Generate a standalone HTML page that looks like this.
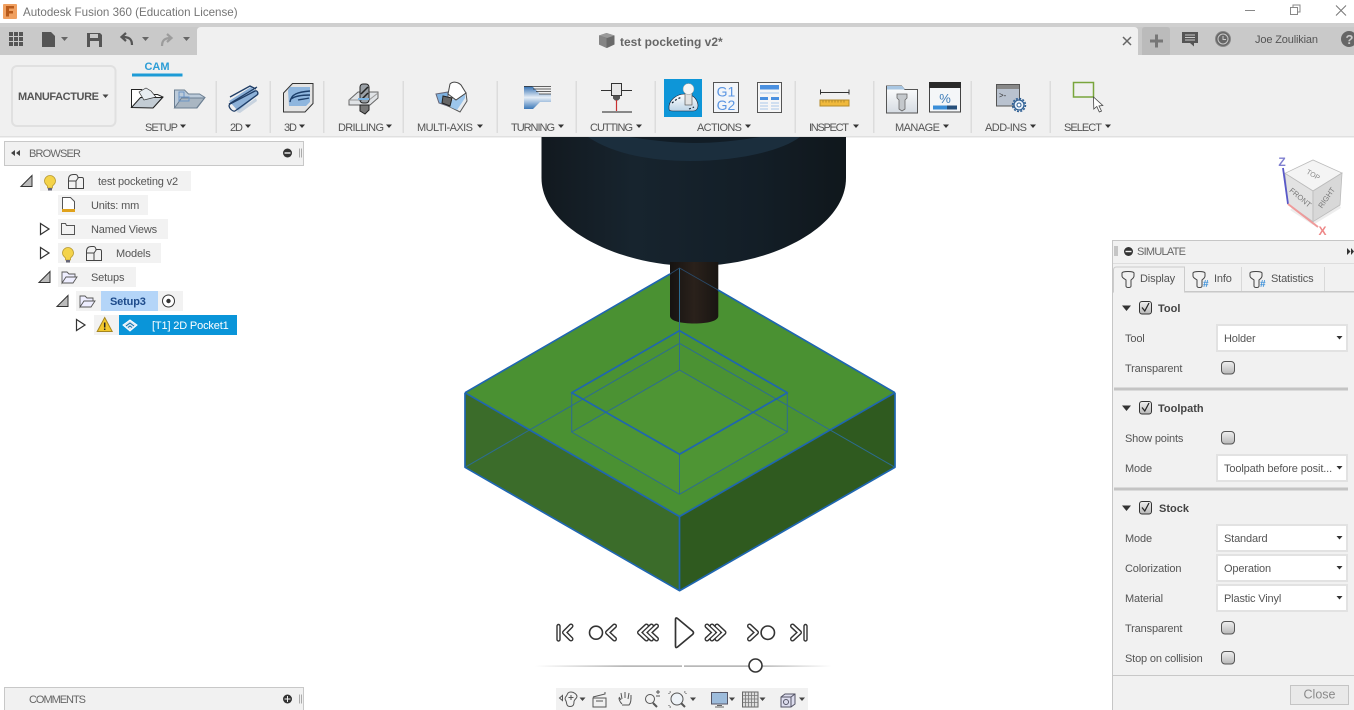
<!DOCTYPE html>
<html><head><meta charset="utf-8"><title>Autodesk Fusion 360</title>
<style>
html,body{margin:0;padding:0;background:#fff;width:1354px;height:710px;overflow:hidden}
svg{display:block;font-family:"Liberation Sans",Arial,sans-serif}
.l{font-size:11px;fill:#555}
.t{font-size:11px;fill:#555;letter-spacing:-.15px}
.p{font-size:11px;fill:#555;letter-spacing:-.15px}
.h{font-size:11px;font-weight:bold;fill:#444}
</style></head><body>
<svg width="1354" height="710" viewBox="0 0 1354 710" xmlns="http://www.w3.org/2000/svg">
<defs>
<linearGradient id="hold" x1="0" x2="1" y1="0" y2="0"><stop offset="0" stop-color="#12191f"/><stop offset=".3" stop-color="#17242e"/><stop offset=".7" stop-color="#131e27"/><stop offset="1" stop-color="#10171c"/></linearGradient>
<linearGradient id="shank" x1="0" x2="1" y1="0" y2="0"><stop offset="0" stop-color="#161311"/><stop offset=".5" stop-color="#2a211b"/><stop offset="1" stop-color="#191512"/></linearGradient>
<linearGradient id="slide" x1="0" x2="1" y1="0" y2="0"><stop offset="0" stop-color="#fff"/><stop offset=".3" stop-color="#999"/><stop offset=".75" stop-color="#999"/><stop offset="1" stop-color="#fff"/></linearGradient>
<linearGradient id="turn" x1="0" x2="0" y1="0" y2="1"><stop offset="0" stop-color="#2f6db0"/><stop offset=".5" stop-color="#e6eef7"/><stop offset="1" stop-color="#3b78b8"/></linearGradient>
<linearGradient id="dome" x1="0" x2="0" y1="0" y2="1"><stop offset="0" stop-color="#fff"/><stop offset="1" stop-color="#bcd3e6"/></linearGradient>
<linearGradient id="win" x1="0" x2="0" y1="0" y2="1"><stop offset="0" stop-color="#fff"/><stop offset="1" stop-color="#d5dbe2"/></linearGradient>
<linearGradient id="cb" x1="0" x2="0" y1="0" y2="1"><stop offset="0" stop-color="#f0f0f0"/><stop offset="1" stop-color="#b8b8b8"/></linearGradient>
</defs>

<!-- title bar -->
<rect width="1354" height="23" fill="#fff"/>
<rect x="3" y="4" width="14" height="15" rx="1" fill="#f0a060"/>
<path d="M6 6h8v2.500h-5v2.500h4v2.500h-4v3h-3z" fill="#b85a1a"/>
<text x="23" y="16" font-size="11.600" fill="#757575">Autodesk Fusion 360 (Education License)</text>
<path d="M1245 10.500h10" stroke="#888"/>
<path d="M1290.500 7.500h7v7h-7zM1293 7.500v-2.500h7v7h-2.500" fill="none" stroke="#888"/>
<path d="M1336 5.500l10 10M1346 5.500l-10 10" stroke="#777"/>

<!-- tab bar -->
<rect y="23" width="1354" height="32" fill="#c9c9c9"/>
<rect y="23" width="1354" height="4" fill="#cfcfcf"/>
<path d="M197 55V31q0-4 4-4H1134q4 0 4 4V55z" fill="#f0f0f0"/>
<path d="M1142 55V30q0-3 3-3h22q3 0 3 3V55z" fill="#bbb"/>
<path d="M1150 41h13M1156.500 34.500v13" stroke="#777" stroke-width="3"/>
<g fill="#555">
<path d="M9 32h4v4h-4zM14 32h4v4h-4zM19 32h4v4h-4zM9 37h4v4h-4zM14 37h4v4h-4zM19 37h4v4h-4zM9 42h4v4h-4zM14 42h4v4h-4zM19 42h4v4h-4z"/>
<path d="M42 32h9l4 4v11h-13z"/>
<path d="M61 37h7l-3.500 4z" fill="#666"/>
<path d="M87 33h13l2 2v12h-15zM90 34v4h8v-4zM90 41v6h9v-6z" fill-rule="evenodd"/>
<path d="M142 37h7l-3.500 4zM183 37h7l-3.500 4z" fill="#666"/>
</g>
<path d="M132 45c0-6-3-8-9-8M126 33l-4.500 4 4.500 4" fill="none" stroke="#555" stroke-width="2.200"/>
<path d="M163 46c0-6 3-8 9-8M168 34l4.500 4-4.500 4" fill="none" stroke="#9c9c9c" stroke-width="2.200" transform="translate(-1 0)"/>
<path d="M599 35.500l7.500-2.500 8 2.500v9l-7.500 3.500-8-3.500z" fill="#6a6a6a"/>
<path d="M599 35.500l7.500-2.500 8 2.500-7.500 2.500z" fill="#9a9a9a"/>
<path d="M599 35.500l7.500 2.500v10l-7.500-3.500z" fill="#858585"/>
<text x="620" y="46" font-size="12" font-weight="bold" fill="#666">test pocketing v2*</text>
<path d="M1123 37l8 8M1131 37l-8 8" stroke="#666" stroke-width="1.500"/>
<path d="M1182 32h16v11h-4v3.500l-4-3.500h-8z" fill="#555"/><path d="M1185 35h10M1185 37.500h10M1185 40h10" stroke="#c9c9c9"/>
<circle cx="1223" cy="39" r="7.500" fill="#666" stroke="#888" stroke-width="1"/><circle cx="1223" cy="39" r="5" fill="none" stroke="#c9c9c9"/><path d="M1223 36v3.500h3" stroke="#c9c9c9" fill="none"/>
<text x="1255" y="43" font-size="11" letter-spacing="-.15" fill="#555">Joe Zoulikian</text>
<circle cx="1349" cy="39" r="8" fill="#666"/><text x="1345.500" y="44" font-size="13" font-weight="bold" fill="#c9c9c9">?</text>

<!-- ribbon -->
<rect y="55" width="1354" height="81" fill="#f0f0f0"/>
<rect y="136" width="1354" height="1.500" fill="#e0e0e0"/>
<rect x="12" y="66" width="103.500" height="60" rx="5" fill="#f0f0f0" stroke="#e0e0e0" stroke-width="2"/>
<text x="18" y="100" font-size="11" font-weight="bold" fill="#555" textLength="81" lengthAdjust="spacing">MANUFACTURE</text>
<path d="M102.500 94.500h6l-3 3.500z" fill="#444"/>
<text x="157" y="70" font-size="11" font-weight="bold" fill="#2c9dd6" text-anchor="middle">CAM</text>
<rect x="132" y="73.500" width="50.500" height="3" fill="#1d9bd6"/>
<g fill="#dcdcdc">
<rect x="215.500" y="81" width="1.500" height="52"/><rect x="269.500" y="81" width="1.500" height="52"/><rect x="323" y="81" width="1.500" height="52"/><rect x="402.500" y="81" width="1.500" height="52"/><rect x="496.500" y="81" width="1.500" height="52"/><rect x="575.500" y="81" width="1.500" height="52"/><rect x="654.500" y="81" width="1.500" height="52"/><rect x="794.500" y="81" width="1.500" height="52"/><rect x="873" y="81" width="1.500" height="52"/><rect x="970.500" y="81" width="1.500" height="52"/><rect x="1049.500" y="81" width="1.500" height="52"/>
</g>
<text class="l" x="145" y="131" textLength="33" lengthAdjust="spacing">SETUP</text>
<text class="l" x="230" y="131" textLength="13" lengthAdjust="spacing">2D</text>
<text class="l" x="284" y="131" textLength="13" lengthAdjust="spacing">3D</text>
<text class="l" x="338" y="131" textLength="46" lengthAdjust="spacing">DRILLING</text>
<text class="l" x="417" y="131" textLength="56" lengthAdjust="spacing">MULTI-AXIS</text>
<text class="l" x="511" y="131" textLength="44" lengthAdjust="spacing">TURNING</text>
<text class="l" x="590" y="131" textLength="43" lengthAdjust="spacing">CUTTING</text>
<text class="l" x="697" y="131" textLength="45" lengthAdjust="spacing">ACTIONS</text>
<text class="l" x="809" y="131" textLength="40" lengthAdjust="spacing">INSPECT</text>
<text class="l" x="895" y="131" textLength="45" lengthAdjust="spacing">MANAGE</text>
<text class="l" x="985" y="131" textLength="42" lengthAdjust="spacing">ADD-INS</text>
<text class="l" x="1064" y="131" textLength="38" lengthAdjust="spacing">SELECT</text>
<g fill="#333">
<path d="M180 124.500h6l-3 3.500zM245 124.500h6l-3 3.500zM299 124.500h6l-3 3.500zM386 124.500h6l-3 3.500zM477 124.500h6l-3 3.500zM558 124.500h6l-3 3.500zM636 124.500h6l-3 3.500zM745 124.500h6l-3 3.500zM853 124.500h6l-3 3.500zM943 124.500h6l-3 3.500zM1030 124.500h6l-3 3.500zM1105 124.500h6l-3 3.500z"/>
</g>

<!-- setup icons -->
<path d="M131.500 89.500h10l6 5h10l5.500 2.500-9.500 10.500h-22z" fill="#fff" stroke="#222"/>
<path d="M131.500 107.500l9-10h22l-9.500 10.500z" fill="#c3ccd4" stroke="#222"/>
<path d="M139 92l7-4 5 3 5 6-12 3z" fill="#e8edf2" stroke="#333" stroke-width=".7"/>
<path d="M174.500 90h10l4 4h11l5.500 3.500-8 10.500h-22.500z" fill="#bccbda" stroke="#6c7f92"/>
<path d="M174.500 108l7-10h23l-8 10z" fill="#a9b6c2" stroke="#6c7f92"/>
<path d="M179 92h5v5h5v4h-10zM179 97h5" fill="none" stroke="#6b95c6"/>
<!-- 2D -->
<path d="M229 101l22-14 8 7-21 17z" fill="#8db1d8"/>
<path d="M230 97l20-11 6 3M229 104l28-17M235 111l22-16c2-2 0-5-2-4l-25 13c-3 2 2 8 5 7" fill="none" stroke="#1f3d66" stroke-width="1.300"/>
<path d="M236 112l20-14 1 3-17 12z" fill="#c8d3df"/>
<!-- 3D -->
<path d="M283.500 93l9-9.500h20.500v20l-8 8.500h-21.500z" fill="#e4e4e4" stroke="#333"/>
<path d="M288 90l2-3h20v15l-4 4h-17z" fill="#8fb6de"/>
<path d="M290 102c1-8 8-10 20-11M291 99c4-3 10-4 19-4M298 100c4-1 8-1 11-2" fill="none" stroke="#1d3f6b" stroke-width="1.400"/>
<!-- drilling -->
<path d="M349 100l9-8h20v6l-8 7h-21z" fill="#e0e3e6" stroke="#666"/>
<path d="M349 100h20l9-7" fill="none" stroke="#999"/>
<rect x="360" y="84" width="9" height="19" rx="3" fill="#9aa0a6" stroke="#222"/>
<path d="M361 94l7-7M361 100l7-7" stroke="#222" stroke-width="1.500"/>
<path d="M360 105h9v5l-4 4-5-3z" fill="#777" stroke="#222"/>
<path d="M358 99h11" stroke="#7ab2e0" stroke-width="2"/>
<!-- multi-axis -->
<path d="M436 94l12-2v14l-9-3z" fill="#7fb2e0" stroke="#667"/>
<path d="M454 100l12-7 1 8-7 11-12-6z" fill="#e6eaee" stroke="#555"/>
<path d="M452 100l13-6 0 4-8 12-7-3z" fill="#9cc6ec"/>
<path d="M450 84c3-3 8-2 11 1l5 8-10 7-8-6z" fill="#fff" stroke="#444"/>
<path d="M443 96l9 2-2 8-8-3z" fill="#666" stroke="#222"/>
<!-- turning -->
<path d="M524 86h8l8 8h11v8h-11l-7 7h-9z" fill="url(#turn)"/>
<path d="M524 86.500h27M533 89h18M536 91.500h15M539 94h12" stroke="#333" stroke-width=".8"/>
<!-- cutting -->
<path d="M601 90.500h31" stroke="#333"/>
<rect x="611.500" y="83.500" width="10" height="12" fill="#e8e8e8" stroke="#333"/>
<path d="M613 95.500h7v3l-2 2h-3l-2-2z" fill="#555"/>
<path d="M616.500 100v11" stroke="#c83030" stroke-width="1.200"/>
<path d="M602 112h30" stroke="#888" stroke-width="2"/>
<!-- actions -->
<rect x="664" y="79" width="38" height="38" fill="#0e96d8"/>
<path d="M669 109c-1-9 8-15 16-15 7 0 12 4 13 11 0 5-3 6-5 6h-20c-3 0-4-1-4-2z" fill="url(#dome)" stroke="#223" stroke-width=".6"/>
<rect x="685" y="92" width="7" height="13" fill="#e2e2e2" stroke="#444" stroke-width=".6"/>
<circle cx="688.500" cy="89" r="5.500" fill="#f6f6f6" stroke="#999" stroke-width=".5"/>
<path d="M672 103l5-4 5-2M689 109l5-2" stroke="#123" stroke-width="1.200" stroke-dasharray="2 2" fill="none"/>
<rect x="713.500" y="82.500" width="25" height="30" fill="#f2f5f9" stroke="#555"/>
<text x="726" y="96.500" font-size="14" fill="#5a95e2" text-anchor="middle">G1</text>
<text x="726" y="110" font-size="14" fill="#5a95e2" text-anchor="middle">G2</text>
<rect x="757.500" y="82.500" width="24" height="30" fill="#f6f6f6" stroke="#555"/>
<rect x="760" y="85" width="19" height="4.500" fill="#4a90e0"/>
<rect x="760" y="97" width="8" height="3" fill="#4a90e0"/><rect x="771" y="97" width="8" height="3" fill="#4a90e0"/>
<path d="M760 93h19M760 103h8M771 103h8M760 106h8M771 106h8M760 109h8M771 109h8" stroke="#a9c8ea"/>
<!-- inspect -->
<path d="M820.500 89.500v5M849 89.500v5M820.500 92.500h28.500" stroke="#333"/>
<rect x="820" y="100" width="29" height="6" fill="#f0b93c" stroke="#b58a2a"/>
<path d="M823 100.500v2M826 100.500v2M829 100.500v2M832 100.500v2M835 100.500v2M838 100.500v2M841 100.500v2M844 100.500v2" stroke="#8a6a1a" stroke-width=".6"/>
<!-- manage -->
<path d="M886.500 86h15l3 3.500h13v23.500h-31z" fill="url(#win)" stroke="#555"/>
<path d="M887 86h15l3 3.500h-18z" fill="#a8c6e2"/>
<path d="M897 94h10v4l-2 2v9l-3 2-3-2v-9l-2-2z" fill="#c4c8cc" stroke="#666" stroke-width=".8"/>
<rect x="929.500" y="82.500" width="31" height="29.500" fill="#f4f6f8" stroke="#444"/>
<rect x="929" y="82" width="32" height="6" fill="#2a2a2a"/>
<text x="945" y="103" font-size="13" fill="#3f7db8" text-anchor="middle">%</text>
<rect x="933" y="105.500" width="14" height="4" fill="#3a8ed8"/><rect x="947" y="105.500" width="10" height="4" fill="#264f7a"/>
<!-- add-ins -->
<rect x="996.500" y="84.500" width="23" height="21.500" fill="#b9c2cf" stroke="#555"/>
<path d="M997 85h22v4h-22z" fill="#888"/>
<text x="999" y="98" font-size="8" fill="#333">&gt;-</text>
<circle cx="1019" cy="105" r="5" fill="#e8f1fa" stroke="#2e5f94" stroke-width="1.300"/>
<circle cx="1019" cy="105" r="6.500" fill="none" stroke="#2e5f94" stroke-width="1.500" stroke-dasharray="2 1.400"/>
<circle cx="1019" cy="105" r="2" fill="#fff" stroke="#2e5f94"/>
<!-- select -->
<rect x="1073.500" y="82.500" width="20" height="14.500" fill="none" stroke="#79a53c" stroke-width="1.500"/>
<path d="M1093.500 97l.3 12 3-2.500 2.500 5.500 2.200-1-2.500-5 3.800-.5z" fill="#fff" stroke="#444" stroke-width=".8"/>

<!-- holder -->
<path d="M541.500 137H846V178C846 228 770 266 694 266S541.500 228 541.500 178Z" fill="url(#hold)"/>
<path d="M588 137H800C780 152 735 161 690 161S610 152 588 137Z" fill="#1b2e3d"/>
<path d="M630 137H760C735 141 715 143 695 143S655 141 630 137Z" fill="#121d26"/>

<!-- stock -->
<path d="M465 392.700L679.500 516.500V590.700L465 467.300Z" fill="#3b6c2a"/>
<path d="M895 392.700L679.500 516.500V590.700L895 467.300Z" fill="#2f5a1f"/>
<path d="M679.500 268L895 392.700L679.500 516.500L465 392.700Z" fill="#4a9132"/>
<path d="M670 262h48.300v54c0 5-11 7.500-24 7.500s-24.300-2.500-24.300-7.500z" fill="url(#shank)"/>
<path d="M679.500 370L787.300 432L679.500 494.300L571.700 432Z" fill="#4e9534"/>
<path d="M679.500 370L787.300 432V392.700L679.500 330.700L571.700 392.700V432Z" fill="#4b9233"/>
<!-- hidden lines -->
<g fill="none" stroke="#2c6c92" stroke-width="1">
<path d="M465 467.300L679.500 343.300L895 467.300M679.500 268V343.300"/>
<path d="M679.500 330.700V370M571.700 392.700V432M787.300 392.700V432M679.500 454.300V494.300"/>
<path d="M679.500 370L787.300 432L679.500 494.300L571.700 432Z"/>
</g>
<g fill="none" stroke="#1f66b0" stroke-width="1.700" stroke-linejoin="round">
<path d="M679.500 516.500L895 392.700M679.500 516.500L465 392.700M465 392.700L670 274M718 290L895 392.700"/>
<path d="M465 392.700V467.300L679.500 590.700L895 467.300V392.700M679.500 516.500V590.700"/>
<path d="M679.500 330.700L787.300 392.700L679.500 454.300L571.700 392.700Z"/>
</g>
<path d="M670 274L679.500 268L718 290" fill="none" stroke="#294a6a" stroke-width=".8"/>

<!-- view cube -->
<path d="M1290 210l23 15 28-17-3-6-38-2z" fill="#e9e9e9" opacity=".8"/>
<path d="M1285 173.300L1313 160L1342 173L1313 191Z" fill="#f4f4f4" stroke="#bbb" stroke-width=".8"/>
<path d="M1285 173.300L1313 191V221.700L1288 204Z" fill="#e2e2e2" stroke="#bbb" stroke-width=".8"/>
<path d="M1313 191L1342 173L1340 205L1313 221.700Z" fill="#d8d8d8" stroke="#bbb" stroke-width=".8"/>
<path d="M1283 168L1288 204" stroke="#5858c8" stroke-width="1.800"/>
<path d="M1288 204L1318 227" stroke="#ef9a9a" stroke-width="2"/>
<text x="1282" y="166" font-size="12" font-weight="bold" fill="#8080d0" text-anchor="middle">Z</text>
<text x="1322.500" y="235" font-size="12" font-weight="bold" fill="#ee8888" text-anchor="middle">X</text>
<text x="1313" y="177" font-size="7" fill="#888" text-anchor="middle" transform="rotate(30 1313 175)">TOP</text>
<text x="1300" y="200" font-size="7.500" fill="#777" text-anchor="middle" transform="rotate(40 1300 198)">FRONT</text>
<text x="1327" y="200" font-size="7.500" fill="#777" text-anchor="middle" transform="rotate(-55 1327 198)">RIGHT</text>

<!-- browser -->
<rect x="4.500" y="141.500" width="299" height="24" fill="#f1f1f1" stroke="#c8c8c8"/>
<path d="M15 150v6l-4-3zM20 150v6l-4-3z" fill="#444"/>
<text x="29" y="157" font-size="11" fill="#666" textLength="52" lengthAdjust="spacing">BROWSER</text>
<circle cx="287.500" cy="153" r="4.500" fill="#333"/><rect x="284.500" y="152.300" width="6" height="1.400" fill="#f1f1f1"/>
<path d="M299.500 148.500v9M301.500 148.500v9" stroke="#aaa"/>
<g fill="#f2f2f2">
<rect x="40" y="171" width="151" height="20"/><rect x="58" y="195" width="90" height="20"/><rect x="58" y="219" width="110" height="20"/><rect x="58" y="243" width="103" height="20"/><rect x="58" y="267" width="78" height="20"/><rect x="76" y="291" width="107" height="20"/><rect x="94" y="315" width="25" height="20"/>
</g>
<rect x="101" y="291" width="57" height="20" fill="#b4d5f8"/>
<rect x="119" y="315" width="118" height="20" fill="#0a95d9"/>
<!-- arrows -->
<path d="M21 186.500L32 175.500V186.500Z" fill="#bbb" stroke="#333"/>
<path d="M39 282.500L50 271.500V282.500Z" fill="#bbb" stroke="#333"/>
<path d="M57 306.500L68 295.500V306.500Z" fill="#bbb" stroke="#333"/>
<path d="M40.500 223.500L49 229L40.500 234.500Z M40.500 247.500L49 253L40.500 258.500Z M76.500 319.500L85 325L76.500 330.500Z" fill="#fff" stroke="#333" stroke-width="1.200"/>
<!-- bulbs -->
<path d="M47.500 186c-2-2-3-3-3-5a5.500 5.500 0 0 1 11 0c0 2-1 3-3 5v2h-5z" fill="#f4d34a" stroke="#b89a30" stroke-width=".8"/><rect x="48" y="188" width="4" height="2.500" fill="#667"/>
<path d="M65.500 258c-2-2-3-3-3-5a5.500 5.500 0 0 1 11 0c0 2-1 3-3 5v2h-5z" fill="#f4d34a" stroke="#b89a30" stroke-width=".8"/><rect x="66" y="260" width="4" height="2.500" fill="#667"/>
<path d="M68.500 188.500v-9q0-5 5-5h2q2 0 2.500 3h4q1.500 0 1.500 2v9zM76 188.500v-7.500h-7.500M76 181l2.500-3.500" fill="none" stroke="#444"/>
<path d="M86.500 260.500v-9q0-5 5-5h2q2 0 2.500 3h4q1.500 0 1.500 2v9zM94 260.500v-7.500h-7.500M94 253l2.500-3.500" fill="none" stroke="#444"/>
<path d="M62.500 197.500h8l4 4v8h-12z" fill="#fff" stroke="#555"/>
<rect x="62" y="209" width="13" height="3" fill="#e0a21c"/>
<path d="M61.500 223.500v11h13v-9h-8l-1-2z" fill="none" stroke="#555"/>
<path d="M62 272h5l2 2h6v3h-9l-4 6zM62 283h11l4-6h-11" fill="#eef" stroke="#555" stroke-width=".9"/>
<path d="M80 296h5l2 2h6v3h-9l-4 6zM80 307h11l4-6h-11" fill="#eef" stroke="#555" stroke-width=".9"/>
<circle cx="168.500" cy="301" r="6" fill="#fff" stroke="#333"/><circle cx="168.500" cy="301" r="2.200" fill="#333"/>
<path d="M104.700 317.500l7.500 14h-15z" fill="#f2c82c" stroke="#a58620"/>
<path d="M104.700 322.500v5M104.700 328.500v1.500" stroke="#222" stroke-width="1.500"/>
<path d="M123 325l7-5 7 5-7 6z" fill="#dce8f4" stroke="#fff"/><path d="M126 326l4-3 4 3M128 327.500l2-1.500 2 1.500" fill="none" stroke="#0a6fa8"/>
<text class="t" x="98" y="185">test pocketing v2</text>
<text class="t" x="91" y="209">Units: mm</text>
<text class="t" x="91" y="233">Named Views</text>
<text class="t" x="116" y="257">Models</text>
<text class="t" x="91" y="281">Setups</text>
<text class="t" x="110" y="305" style="fill:#1d4a8a;font-weight:bold">Setup3</text>
<text class="t" x="152" y="329" style="fill:#fff">[T1] 2D Pocket1</text>

<!-- comments -->
<rect x="4.500" y="687.500" width="299" height="24" fill="#f1f1f1" stroke="#c8c8c8"/>
<text x="29" y="703" font-size="11" fill="#666" textLength="57" lengthAdjust="spacing">COMMENTS</text>
<circle cx="287.500" cy="699" r="4.500" fill="#333"/><path d="M284.500 699h6M287.500 696v6" stroke="#f1f1f1"/>
<path d="M299.500 694.500v9M301.500 694.500v9" stroke="#aaa"/>

<!-- playback -->
<g fill="none" stroke-linecap="round" stroke-linejoin="round">
<rect x="557" y="624.500" width="3" height="16.500" rx="1.500" fill="#fff" stroke="#333" stroke-width="1.400"/>
<circle cx="596" cy="632.700" r="6.500" stroke="#333" stroke-width="1.600"/>
<circle cx="767.800" cy="632.700" r="6.700" stroke="#333" stroke-width="1.600"/>
<rect x="804" y="624.500" width="3" height="16.500" rx="1.500" fill="#fff" stroke="#333" stroke-width="1.400"/>
<path d="M675.500 619.500q0-2.500 2-1L692.500 631q2 1.700 0 3.500L677.500 647q-2 1.500-2-1Z" stroke="#333" stroke-width="1.700" fill="#fff"/>
<g stroke="#333" stroke-width="5">
<path d="M571 626L564.500 632.500L571 639"/>
<path d="M614.500 626L607.500 632.500L614.500 639"/>
<path d="M646.500 626L639.500 632.500L646.500 639"/><path d="M651.500 626L644.500 632.500L651.500 639"/><path d="M656.500 626L649.500 632.500L656.500 639"/>
<path d="M707 626L714 632.500L707 639"/><path d="M712 626L719 632.500L712 639"/><path d="M717 626L724 632.500L717 639"/>
<path d="M749.500 626L756.500 632.500L749.500 639"/>
<path d="M792.500 626L799.500 632.500L792.500 639"/>
</g>
<g stroke="#fff" stroke-width="2.200">
<path d="M571 626L564.500 632.500L571 639"/>
<path d="M614.500 626L607.500 632.500L614.500 639"/>
<path d="M646.500 626L639.500 632.500L646.500 639"/><path d="M651.500 626L644.500 632.500L651.500 639"/><path d="M656.500 626L649.500 632.500L656.500 639"/>
<path d="M707 626L714 632.500L707 639"/><path d="M712 626L719 632.500L712 639"/><path d="M717 626L724 632.500L717 639"/>
<path d="M749.500 626L756.500 632.500L749.500 639"/>
<path d="M792.500 626L799.500 632.500L792.500 639"/>
</g>
</g>
<rect x="535" y="665.500" width="297" height="1.200" fill="url(#slide)"/>
<rect x="682" y="664" width="2" height="4" fill="#fff"/>
<circle cx="755.500" cy="665.500" r="6.500" fill="#fff" stroke="#333" stroke-width="1.600"/>

<!-- nav bar -->
<rect x="556" y="688" width="252" height="22" fill="#f1f1f1"/>
<g fill="none" stroke="#555" stroke-width="1">
<path d="M559.500 698l3-2.500v5zM571 692c-4 0-3.500 3-5 4.500-1.500 1.500-1 3 0 4.500 1 2 0 5.500 4 5.500s4-3 4-5 3-3 3-5-3-4.500-6-4.500z"/>
<path d="M571 695v5M568.500 697.500h5"/>
<path d="M593 697l12-3v-2M593 698h13v9h-13zM596 701h7"/>
<path d="M621 700l-2-3M622 699l-1-6M625 698v-6M628 699l1-6M631 699l0-4M622 704c-2-2-3-4-3-6M622 705h7c2-2 2-5 2-10"/>
<circle cx="650" cy="699" r="4.500"/><path d="M653 703l4 4" stroke-width="2"/>
<path d="M656 692h4M658 690v4M656 696h4"/>
<circle cx="677" cy="699" r="6" fill="#eef3f8"/><path d="M681 703l4 4" stroke-width="2"/>
<path d="M671 692h-2v2M671 707h-2v-2M684 692h2v2" stroke-dasharray="1.500 1.500"/>
</g>
<path d="M711.500 692.500h16v11.500h-16z" fill="#9dbcdc" stroke="#556"/><path d="M717 705.500h5M715 707h9" stroke="#666"/>
<rect x="742.500" y="692" width="15.500" height="15" fill="#ddd" stroke="#666"/>
<path d="M745.500 692v15M748.500 692v15M751.500 692v15M754.500 692v15M742.500 695.500h15.500M742.500 699h15.500M742.500 702.500h15.500" stroke="#777" stroke-width=".8"/>
<path d="M781 697l4-3h10v10l-4 3h-10z" fill="#dde" stroke="#556"/><path d="M781 697h10v10M791 697l4-3" fill="none" stroke="#556"/><circle cx="786" cy="702" r="2.500" fill="none" stroke="#556"/>
<g fill="#444"><path d="M579.500 697.500h6l-3 3.500zM690 697.500h6l-3 3.500zM729 697.500h6l-3 3.500zM759.500 697.500h6l-3 3.500zM799 697.500h6l-3 3.500z"/></g>

<!-- simulate panel -->
<rect x="1112.500" y="240.500" width="242" height="470" fill="#f1f1f1" stroke="#c6c6c6"/>
<rect x="1113" y="263" width="241" height="1" fill="#ddd"/>
<path d="M1115 246v10M1117 246v10" stroke="#999"/>
<circle cx="1128.500" cy="251.500" r="4.500" fill="#333"/><rect x="1125.500" y="250.800" width="6" height="1.400" fill="#f1f1f1"/>
<text x="1137" y="255" font-size="11" fill="#666" textLength="49" lengthAdjust="spacing">SIMULATE</text>
<path d="M1347 248v7l3.500-3.500zM1351 248v7l3-3.500z" fill="#333"/>
<!-- tabs -->
<rect x="1113" y="291" width="241" height="1.500" fill="#c8c8c8"/>
<path d="M1113.500 292V270q0-3 3-3H1184.500V292" fill="#f1f1f1" stroke="#ccc"/>
<rect x="1114" y="290" width="70" height="3" fill="#f1f1f1"/>
<path d="M1241.500 267v24M1324.500 267v24" stroke="#d8d8d8"/>
<g fill="none" stroke="#444">
<path d="M1122 273c0-2 12-2 12 0v3c0 2-2 3-3 4v6c0 2-5 2-5 0v-6c-1-1-4-2-4-4z"/>
<path d="M1193 273c0-2 12-2 12 0v3c0 2-2 3-3 4v6c0 2-5 2-5 0v-6c-1-1-4-2-4-4z"/>
<path d="M1250 273c0-2 12-2 12 0v3c0 2-2 3-3 4v6c0 2-5 2-5 0v-6c-1-1-4-2-4-4z"/>
</g>
<g font-size="10" fill="#3b8fd8" font-weight="bold"><text x="1203" y="287">#</text><text x="1260" y="287">#</text></g>
<text class="p" x="1140" y="282">Display</text>
<text class="p" x="1214" y="282">Info</text>
<text class="p" x="1271" y="282">Statistics</text>

<!-- section rules -->
<rect x="1114" y="387.500" width="234" height="3" fill="#c4c4c4"/>
<rect x="1114" y="487.500" width="234" height="3" fill="#c4c4c4"/>
<rect x="1113" y="675" width="241" height="1" fill="#c8c8c8"/>
<!-- section headers -->
<g fill="#333"><path d="M1122 305.500h9l-4.500 5.500zM1122 405.500h9l-4.500 5.500zM1122 505.500h9l-4.500 5.500z"/></g>
<g>
<rect x="1139.500" y="301.500" width="12" height="12.500" rx="2.500" fill="url(#cb)" stroke="#333"/><path d="M1142 307.500l2.800 3.500 4.200-8" fill="none" stroke="#222" stroke-width="1.200"/>
<rect x="1139.500" y="401.500" width="12" height="12.500" rx="2.500" fill="url(#cb)" stroke="#333"/><path d="M1142 407.500l2.800 3.500 4.200-8" fill="none" stroke="#222" stroke-width="1.200"/>
<rect x="1139.500" y="501.500" width="12" height="12.500" rx="2.500" fill="url(#cb)" stroke="#333"/><path d="M1142 507.500l2.800 3.500 4.200-8" fill="none" stroke="#222" stroke-width="1.200"/>
</g>
<text class="h" x="1158" y="312">Tool</text>
<text class="h" x="1158" y="412">Toolpath</text>
<text class="h" x="1159" y="512">Stock</text>
<text class="p" x="1125" y="342">Tool</text>
<text class="p" x="1125" y="372">Transparent</text>
<text class="p" x="1125" y="442">Show points</text>
<text class="p" x="1125" y="472">Mode</text>
<text class="p" x="1125" y="542">Mode</text>
<text class="p" x="1125" y="572">Colorization</text>
<text class="p" x="1125" y="602">Material</text>
<text class="p" x="1125" y="632">Transparent</text>
<text class="p" x="1125" y="662">Stop on collision</text>
<!-- dropdowns -->
<g fill="#fff" stroke="#e2e2e2" stroke-width="2">
<rect x="1217" y="325" width="130" height="26"/><rect x="1217" y="455" width="130" height="26"/><rect x="1217" y="525" width="130" height="26"/><rect x="1217" y="555" width="130" height="26"/><rect x="1217" y="585" width="130" height="26"/>
</g>
<text class="p" x="1224" y="342">Holder</text>
<text class="p" x="1224" y="472" textLength="108" lengthAdjust="spacing">Toolpath before posit...</text>
<text class="p" x="1224" y="542">Standard</text>
<text class="p" x="1224" y="572">Operation</text>
<text class="p" x="1224" y="602">Plastic Vinyl</text>
<g fill="#333"><path d="M1336.500 336h6l-3 3.500zM1336.500 466h6l-3 3.500zM1336.500 536h6l-3 3.500zM1336.500 566h6l-3 3.500zM1336.500 596h6l-3 3.500z"/></g>
<!-- checkboxes -->
<g fill="url(#cb)" stroke="#555">
<rect x="1221.500" y="361.500" width="13" height="12.500" rx="3.500"/><rect x="1221.500" y="431.500" width="13" height="12.500" rx="3.500"/><rect x="1221.500" y="621.500" width="13" height="12.500" rx="3.500"/><rect x="1221.500" y="651.500" width="13" height="12.500" rx="3.500"/>
</g>
<rect x="1290.500" y="685.500" width="58" height="19" fill="#e9e9e9" stroke="#c4c4c4"/>
<text x="1319.500" y="698.500" font-size="12.500" fill="#8a8a8a" text-anchor="middle">Close</text>
</svg>
</body></html>
